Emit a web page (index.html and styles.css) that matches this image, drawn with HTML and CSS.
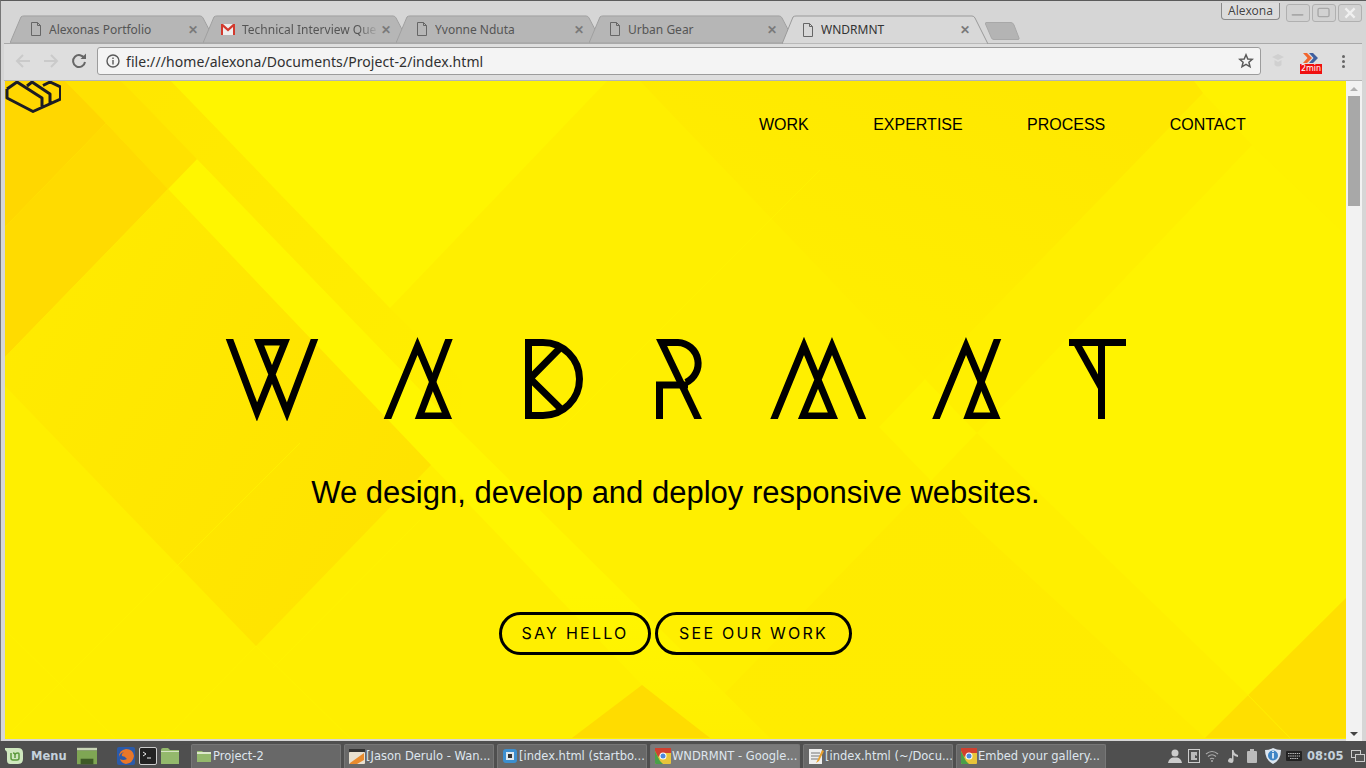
FILE: index.html
```html
<!DOCTYPE html>
<html lang="en">
<head>
<meta charset="utf-8">
<title>WNDRMNT</title>
<link rel="stylesheet" href="styles.css">
</head>
<body>
<div class="desktop">
  <div class="window">
    <div class="tabstrip">
      <div class="tab">
        <svg class="tab-shape" viewBox="0 0 206 29" preserveAspectRatio="none"><path class="tab-bg" d="M0 29 L11 2 Q12 1 14 1 H190 Q192 1 193 3 L206 29 Z"/></svg>
        <svg class="page-icon" viewBox="0 0 12 14"><path d="M1.5 .5 H7.5 L10.5 3.5 V13.5 H1.5 Z M7.5 .5 V3.5 H10.5"/></svg>
        <span class="tab-title">Alexonas Portfolio</span><span class="tab-x">✕</span>
      </div>
      <div class="tab">
        <svg class="tab-shape" viewBox="0 0 206 29" preserveAspectRatio="none"><path class="tab-bg" d="M0 29 L11 2 Q12 1 14 1 H190 Q192 1 193 3 L206 29 Z"/></svg>
        <svg class="gmail-icon" viewBox="0 0 14 11"><rect width="14" height="11" fill="#eee"/><path d="M0 0 H2 L7 4.5 L12 0 H14 V11 H12 V3 L7 7.5 L2 3 V11 H0 Z" fill="#d23a2e"/></svg>
        <span class="tab-title fade">Technical Interview Que</span><span class="tab-x">✕</span>
      </div>
      <div class="tab">
        <svg class="tab-shape" viewBox="0 0 206 29" preserveAspectRatio="none"><path class="tab-bg" d="M0 29 L11 2 Q12 1 14 1 H190 Q192 1 193 3 L206 29 Z"/></svg>
        <svg class="page-icon" viewBox="0 0 12 14"><path d="M1.5 .5 H7.5 L10.5 3.5 V13.5 H1.5 Z M7.5 .5 V3.5 H10.5"/></svg>
        <span class="tab-title">Yvonne Nduta</span><span class="tab-x">✕</span>
      </div>
      <div class="tab">
        <svg class="tab-shape" viewBox="0 0 206 29" preserveAspectRatio="none"><path class="tab-bg" d="M0 29 L11 2 Q12 1 14 1 H190 Q192 1 193 3 L206 29 Z"/></svg>
        <svg class="page-icon" viewBox="0 0 12 14"><path d="M1.5 .5 H7.5 L10.5 3.5 V13.5 H1.5 Z M7.5 .5 V3.5 H10.5"/></svg>
        <span class="tab-title">Urban Gear</span><span class="tab-x">✕</span>
      </div>
      <div class="tab active">
        <svg class="tab-shape" viewBox="0 0 206 29" preserveAspectRatio="none"><path class="tab-bg" d="M0 29 L11 2 Q12 1 14 1 H190 Q192 1 193 3 L206 29 Z"/></svg>
        <svg class="page-icon" viewBox="0 0 12 14"><path d="M1.5 .5 H7.5 L10.5 3.5 V13.5 H1.5 Z M7.5 .5 V3.5 H10.5"/></svg>
        <span class="tab-title">WNDRMNT</span><span class="tab-x">✕</span>
      </div>
      <svg class="newtab" viewBox="0 0 36 20"><path d="M1 1.5 H26 Q28 1.5 29 4 L34 17 Q34.500 18.500 33 18.500 H9 Q7 18.500 6.500 17 L.5 3 Q.2 1.500 1 1.500 Z"/></svg>
      <div class="winctl">
        <span class="profile">Alexona</span>
        <span class="winbtn"><svg viewBox="0 0 24 17"><rect x="5" y="9.500" width="13" height="2" rx="1"/></svg></span>
        <span class="winbtn"><svg viewBox="0 0 24 17"><rect class="outline" x="5.500" y="3.500" width="12" height="9" rx="1.500"/></svg></span>
        <span class="winbtn"><svg viewBox="0 0 24 17"><path class="cross" d="M7 3.500 L17 13.500 M17 3.500 L7 13.500"/></svg></span>
      </div>
    </div>

    <div class="toolbar">
      <svg class="nav-icon dim" viewBox="0 0 16 16"><path d="M15 8 H2 M8 2 L2 8 L8 14"/></svg>
      <svg class="nav-icon dim" viewBox="0 0 16 16"><path d="M1 8 H14 M8 2 L14 8 L8 14"/></svg>
      <svg class="nav-icon" viewBox="0 0 16 16"><path d="M13.500 5.500 A6 6 0 1 0 14 9"/><path class="solid" d="M9.500 6 H15 V.5 Z"/></svg>
      <div class="omnibox">
        <svg class="info" viewBox="0 0 14 14"><circle cx="7" cy="7" r="6"/><path d="M7 6 V10.500 M7 3.500 V5"/></svg>
        <span class="url">file:///home/alexona/Documents/Project-2/index.html</span>
        <svg class="star" viewBox="0 0 16 16"><path d="M8 1.800 L9.800 6 L14.300 6.300 L10.900 9.300 L12 13.800 L8 11.400 L4 13.800 L5.100 9.300 L1.700 6.300 L6.200 6 Z"/></svg>
      </div>
      <svg class="ext-ghost" viewBox="0 0 14 16"><path d="M7 1 L13 4 L7 7 L1 4 Z M3.500 7 V12 Q7 15 10.500 12 V7 L7 9 Z"/></svg>
      <div class="ext-timer">
        <svg viewBox="0 0 16 10"><path class="chev-o" d="M0 0 H4 L9 5 L4 10 H0 L4.500 5 Z"/><path class="chev-b" d="M6 0 H10 L15 5 L10 10 H6 L10.500 5 Z"/></svg>
        <span class="timer-badge">2min</span>
      </div>
      <span class="menu-dots"><i></i><i></i><i></i></span>
    </div>

    <div class="viewport">
      <main class="page">
        <svg class="page-bg" viewBox="5 81 1341 658" preserveAspectRatio="none" aria-hidden="true">
          <defs>
            <linearGradient id="g-diamond" x1="0" y1="0.200" x2="1" y2="0.800"><stop offset="0" stop-color="#ffeb00"/><stop offset="1" stop-color="#ffe200"/></linearGradient>
            <linearGradient id="g-upper" x1="0.800" y1="0.100" x2="0.200" y2="0.900"><stop offset="0" stop-color="#ffe800"/><stop offset="1" stop-color="#ffef00"/></linearGradient>
            <linearGradient id="g-lower" x1="0.500" y1="0" x2="0.500" y2="1"><stop offset="0" stop-color="#ffeb00"/><stop offset="1" stop-color="#ffec00"/></linearGradient>
            <linearGradient id="g-band" x1="0" y1="0" x2="1" y2="1"><stop offset="0" stop-color="#ffe700"/><stop offset="1" stop-color="#ffef00"/></linearGradient>
            <linearGradient id="g-ray" x1="0.500" y1="0" x2="0.500" y2="1"><stop offset="0.750" stop-color="#fff600"/><stop offset="1" stop-color="#ffef00"/></linearGradient>
          </defs>
          <rect x="5" y="81" width="1341" height="658" fill="#ffef00"/>
          <polygon fill="#fff300" points="1252,145 1346,235 1346,598 1248,695 977,433"/>
          <polygon fill="#fff200" points="1194,81 1346,81 1346,235 1252,145 1203,93"/>
          <polygon fill="url(#g-upper)" points="640,81 1194,81 1203,93 925,379 680,123"/>
          <polygon fill="#fff400" points="925,379 977,433 931,481 879,427"/>
          <polygon fill="url(#g-lower)" points="931,481 970,522 1205,738 689,738 689,730"/>
          <polygon fill="url(#g-ray)" points="197,159 462,433 770,738 710,738 642,685 431,465 168,189"/>
          <polygon fill="url(#g-band)" points="121,81 171,81 390,308 462,380 462,433 197,159 134,95"/>
          <polygon fill="#fff500" points="171,81 607,81 390,308"/>
          <polygon fill="#ffe200" points="65,81 121,81 197,159 168,189 106,123"/>
          <polygon fill="#ffd700" points="5,81 65,81 106,123 5,227"/>
          <polygon fill="#ffdb00" points="106,123 168,189 5,357 5,227"/>
          <polygon fill="url(#g-diamond)" points="168,189 431,465 256,646 5,386 5,357"/>
          <polygon fill="#ffdc00" points="642,685 710,738 572,738"/>
          <polygon fill="#ffdf00" points="1346,598 1346,738 1205,738"/>
          <g class="hairlines">
            <path d="M5 630 L115 738"/>
            <path d="M256 646 L166 738"/>
            <path d="M5 738 L300 443"/>
            <path d="M273 668 L420 520"/>
            <path d="M256 646 L350 738"/>
            <path d="M560 430 L820 170"/>
            <path d="M1248 695 L1290 738"/>
          </g>
        </svg>

        <svg class="brand" viewBox="0 0 56 32" aria-label="WNDRMNT brand mark">
          <path class="brand-line" d="M2 8 L12 1 L37 17 V26 M2 8 V17 L28 30.500 L55.500 18 V6 L45 1 L38 4.500 M22 5 L27 1 L45 13 V22"/>
        </svg>

        <nav class="mainnav">
          <a class="navlink">WORK</a>
          <a class="navlink">EXPERTISE</a>
          <a class="navlink">PROCESS</a>
          <a class="navlink">CONTACT</a>
        </nav>

        <section class="hero">
          <svg class="wordmark" viewBox="225 335 902 87" role="img" aria-label="WNDRMNT">
            <defs>
              <clipPath id="clip-flat"><rect x="200" y="339" width="950" height="82"/></clipPath>
              <clipPath id="clip-foot"><rect x="200" y="330" width="950" height="89"/></clipPath>
              <clipPath id="clip-box"><rect x="200" y="339" width="950" height="80"/></clipPath>
              <g id="glyph-a" class="stroke">
                <g clip-path="url(#clip-box)"><path d="M450.500 335 L417 423"/></g>
                <g clip-path="url(#clip-foot)"><path d="M385 425 L417.500 346 L447 416 H418"/></g>
              </g>
            </defs>
            <g class="stroke">
              <g clip-path="url(#clip-flat)"><path d="M228 335 L257 412 L285 342 H259 L287 412 L316 335"/></g>
              <use href="#glyph-a"/>
              <path d="M528.500 342.500 H543 A36.500 36.500 0 0 1 543 415.500 H528.500 Z"/>
              <path d="M561 347 L530 378.500 L562 410"/>
              <g clip-path="url(#clip-box)">
                <path d="M658 335 L701 425"/>
                <path d="M659.500 425 V385 H688"/>
                <path d="M662 342.500 H678 A21 21 0 0 1 686 382.500"/>
              </g>
              <g clip-path="url(#clip-foot)"><path d="M771.600 425 L804 346 L833 416 H803 L832 346 L865 425"/></g>
              <use href="#glyph-a" x="548.500"/>
              <g clip-path="url(#clip-flat)">
                <path d="M1069 342.500 H1126"/>
                <path d="M1101.500 339 V419"/>
                <path d="M1072 335 L1101 387"/>
              </g>
            </g>
          </svg>
          <h1 class="tagline">We design, develop and deploy responsive websites.</h1>
          <div class="cta">
            <a class="btn btn-a">SAY HELLO</a>
            <a class="btn btn-b">SEE OUR WORK</a>
          </div>
        </section>
      </main>
      <div class="scrollbar">
        <span class="arrow up"></span>
        <span class="thumb"></span>
        <span class="arrow down"></span>
      </div>
    </div>
  </div>

  <footer class="taskbar">
    <svg class="mint" viewBox="0 0 20 18"><path d="M1 1 H14 Q19 1 19 6 V12 Q19 17 14 17 H6 Q3 17 3 13 V6 Q3 4 1 3 Z" fill="#cfe8bf"/><path d="M7 6 V11 Q7 13 9 13 H13 Q15 13 15 11 V7 Q15 6 14 6 Q11 6 11 8 V11 M11 8 Q11 6 9 6" fill="none" stroke="#5c9a3d" stroke-width="1.500"/></svg>
    <span class="menu-label">Menu</span>
    <svg class="tray-show" viewBox="0 0 22 18"><rect y="0" width="22" height="3" fill="#c9d6b6"/><rect y="3" width="22" height="15" fill="#7fa654"/><rect x="4" y="12" width="14" height="6" fill="#3e5a26"/></svg>
    <span class="launchers">
      <svg viewBox="0 0 18 18"><rect width="18" height="18" rx="2" fill="#2b5aa8"/><path d="M2 10 Q2 3 9 2 Q16 2 17 9 Q16 16 9 17 Q4 16 3 12 Q6 14 10 12 Q8 9 5 9 Q4 7 7 5 Q3 6 2 10 Z" fill="#e8772a"/></svg>
      <svg viewBox="0 0 18 18"><rect x=".5" y=".5" width="17" height="17" rx="1.500" fill="#222" stroke="#ccc"/><path d="M4 5 L7 7 L4 9 M8 11 H12" fill="none" stroke="#eee"/></svg>
      <svg viewBox="0 0 18 18"><path d="M0 3 Q0 1 2 1 H7 L9 3 H18 V17 H0 Z" fill="#94b96c"/><rect y="4" width="18" height="1" fill="#d7e4c3"/></svg>
    </span>
    <span class="task">
      <svg viewBox="0 0 16 14"><path d="M1 2 H6 L7 3 H15 V13 H1 Z" fill="#94b96c"/><rect x="1" y="3" width="14" height="2" fill="#dde8cb"/></svg>
      <span class="task-label">Project-2</span>
    </span>
    <span class="task">
      <svg viewBox="0 0 16 16"><rect y="1" width="16" height="3" fill="#333"/><rect y="4" width="16" height="12" rx="1" fill="#e8e0d0"/><path d="M1 15 L15 5 V12 L8 16 H1 Z" fill="#e88b2e"/></svg>
      <span class="task-label">[Jason Derulo - Wan...</span>
    </span>
    <span class="task">
      <svg viewBox="0 0 16 16"><rect x="1" y="1" width="14" height="14" rx="3" fill="#3d8fd0"/><rect x="4" y="4" width="8" height="8" fill="#dfe8ee"/><rect x="6" y="6" width="4" height="4" fill="#333"/></svg>
      <span class="task-label">[index.html (startbo...</span>
    </span>
    <span class="task current">
      <svg viewBox="0 0 16 16"><rect width="16" height="16" rx="1" fill="#e8c43a"/><path d="M0 0 H16 V5 H8 L3 9 L0 3 Z" fill="#d0402f"/><path d="M0 3 L5 13 L8 16 H1 Q0 16 0 15 Z" fill="#4aa04a"/><circle cx="8" cy="8" r="3.500" fill="#fff"/><circle cx="8" cy="8" r="2.500" fill="#4a88dd"/></svg>
      <span class="task-label">WNDRMNT - Google...</span>
    </span>
    <span class="task">
      <svg viewBox="0 0 16 16"><rect x="1" y="1" width="13" height="15" fill="#eee"/><path d="M3 5 H12 M3 8 H12 M3 11 H10" stroke="#777"/><path d="M14 2 L9 13 L8 15 L11 13 L16 3 Z" fill="#e8a02e"/></svg>
      <span class="task-label">[index.html (~/Docu...</span>
    </span>
    <span class="task">
      <svg viewBox="0 0 16 16"><rect width="16" height="16" rx="1" fill="#e8c43a"/><path d="M0 0 H16 V5 H8 L3 9 L0 3 Z" fill="#d0402f"/><path d="M0 3 L5 13 L8 16 H1 Q0 16 0 15 Z" fill="#4aa04a"/><circle cx="8" cy="8" r="3.500" fill="#fff"/><circle cx="8" cy="8" r="2.500" fill="#4a88dd"/></svg>
      <span class="task-label">Embed your gallery...</span>
    </span>
    <span class="tray">
      <svg class="t-user" viewBox="0 0 14 14"><circle cx="7" cy="4" r="3.500" fill="#ccc"/><path d="M0 14 Q1 9 5 8.500 H9 Q13 9 14 14 Z" fill="#ccc"/></svg>
      <svg class="t-net" viewBox="0 0 12 14"><rect x=".5" y=".5" width="11" height="13" fill="none" stroke="#ccc"/><path d="M3 3 H9 V7 L7 6 V9 H9 V11 H3 Z" fill="#bbb"/></svg>
      <svg class="t-wifi" viewBox="0 0 14 12"><path d="M1 4 Q7 -1 13 4 M3 6.500 Q7 3 11 6.500 M5 9 Q7 7.500 9 9" fill="none" stroke="#aaa" stroke-width="1.200"/><circle cx="7" cy="11" r="1" fill="#aaa"/></svg>
      <svg class="t-music" viewBox="0 0 10 14"><path d="M4 1 H5.500 Q6 5 10 6 V8 Q7 7.500 5.500 6 V11.500 A2.700 2.300 0 1 1 4 9.500 Z" fill="#c8c8c8"/></svg>
      <svg class="t-batt" viewBox="0 0 10 14"><rect x="3" y="0" width="4" height="2" fill="#bbb"/><rect y="2" width="10" height="12" rx="1" fill="#bbb"/></svg>
      <svg class="t-shield" viewBox="0 0 16 16"><path d="M8 0 Q12 2 16 2 Q16 12 8 16 Q0 12 0 2 Q4 2 8 0 Z" fill="#dce6f0"/><circle cx="8" cy="7.500" r="5" fill="#3d85c6"/><path d="M8 5 V10.500 M8 3 V4" stroke="#fff" stroke-width="1.500"/></svg>
      <svg class="t-keys" viewBox="0 0 16 10"><rect width="16" height="10" rx="1" fill="#222"/><path d="M2 2.500 H14 M2 5 H14 M4 7.500 H12" stroke="#bbb" stroke-dasharray="1.500 .7"/></svg>
      <span class="clock">08:05</span>
      <svg class="t-desk" viewBox="0 0 14 12"><rect x=".5" y=".5" width="9" height="7" fill="none" stroke="#ccc"/><rect x="4.500" y="4.500" width="9" height="7" fill="#555" stroke="#ccc"/></svg>
    </span>
  </footer>
</div>
</body>
</html>
```
FILE: styles.css
```css
* { box-sizing: border-box; }
html, body { margin: 0; padding: 0; }
body { width: 1366px; height: 768px; overflow: hidden; background: #4d4d4d; font-family: "Liberation Sans", Arial, sans-serif; }
.desktop { width: 1366px; height: 768px; display: flex; flex-direction: column; }

.window { height: 741px; flex: none; display: flex; flex-direction: column; background: #d6d6d6; border-top: 1px solid #5b5b5b; padding-left: 3px; padding-right: 4px; border-left: 1px solid #777; }

.tabstrip { height: 43px; flex: none; display: flex; align-items: flex-end; padding-left: 6px; position: relative; border-bottom: 1px solid #a9a9a9; }
.tab { width: 206px; height: 28px; flex: none; margin-right: -13px; position: relative; display: flex; align-items: center; padding-left: 20px; font: 12px "Noto Sans", "Open Sans", sans-serif; color: #555; }
.tab-shape { position: absolute; left: 0; top: 0; width: 100%; height: 100%; }
.tab-bg { fill: #b6b6b6; stroke: #a0a0a0; stroke-width: 1; vector-effect: non-scaling-stroke; }
.tab.active { z-index: 2; color: #333; margin-bottom: -1px; height: 29px; }
.tab.active .tab-bg { fill: #d8d8d8; stroke: #9a9a9a; }
.page-icon { width: 12px; height: 14px; position: relative; margin-right: 7px; flex: none; }
.page-icon path { fill: none; stroke: #666; stroke-width: 1; }
.gmail-icon { width: 14px; height: 11px; position: relative; margin-right: 7px; margin-left: -2px; flex: none; }
.tab-title { position: relative; width: 137px; white-space: nowrap; overflow: hidden; flex: none; }
.tab-title.fade { -webkit-mask-image: linear-gradient(90deg, #000 85%, transparent); mask-image: linear-gradient(90deg, #000 85%, transparent); }
.tab-x { position: relative; font-size: 12px; font-weight: 700; color: #7a7a7a; margin-left: 2px; }
.newtab { width: 36px; height: 20px; flex: none; margin: 0 0 2px 10px; position: relative; z-index: 1; }
.newtab path { fill: #b4b4b4; stroke: #a8a8a8; }

.winctl { position: absolute; top: 2px; right: 0; display: flex; align-items: flex-start; gap: 2px; }
.profile { width: 59px; height: 17px; margin-right: 4px; border: 1px solid #8a8a8a; border-top: none; border-radius: 0 0 4px 4px; background: #dcdcdc; text-align: center; font: 12px/16px "Noto Sans", sans-serif; color: #444; text-shadow: 0 0 1px #fff; }
.winbtn { width: 24px; height: 18px; margin-top: 1px; border: 1px solid #b0b0b0; border-radius: 3px; background: #d2d2d2; display: flex; }
.winbtn svg { width: 100%; height: 100%; }
.winbtn rect { fill: #a8a8a8; }
.winbtn rect.outline { fill: none; stroke: #a8a8a8; stroke-width: 1.500; }
.cross { stroke: #f0f0f0; stroke-width: 2.500; fill: none; }

.toolbar { height: 37px; flex: none; display: flex; align-items: center; padding-left: 11px; padding-bottom: 2px; background: #dedede; border-bottom: 1px solid #b5b5b5; }
.nav-icon { width: 16px; height: 16px; margin-right: 12px; flex: none; fill: none; stroke: #666; stroke-width: 2; }
.nav-icon.dim { stroke: #cacaca; }
.nav-icon .solid { fill: #666; stroke: none; }
.omnibox { width: 1164px; height: 28px; margin-left: -2px; flex: none; display: flex; align-items: center; background: #f4f4f4; border: 1px solid #9c9c9c; border-radius: 3px; padding-left: 8px; }
.info { width: 14px; height: 14px; flex: none; fill: none; stroke: #5a5a5a; stroke-width: 1.400; }
.url { margin-left: 6px; font: 14px "Noto Sans", "Open Sans", sans-serif; letter-spacing: .08px; color: #303030; flex: 1; white-space: nowrap; }
.star { width: 16px; height: 16px; margin-right: 6px; flex: none; fill: none; stroke: #5a5a5a; stroke-width: 1.500; }
.ext-ghost { width: 14px; height: 16px; margin-left: 10px; fill: #d0d0d0; flex: none; }
.ext-timer { width: 22px; margin-left: 15px; display: flex; flex-direction: column; align-items: center; flex: none; margin-top: 5px; }
.ext-timer svg { width: 16px; height: 10px; margin-bottom: 1px; }
.chev-o { fill: #f2652d; }
.chev-b { fill: #3f5f9f; }
.timer-badge { width: 22px; height: 10px; background: #f01010; color: #fff; font: 8px/10px "DejaVu Sans", sans-serif; text-align: center; }
.menu-dots { display: flex; flex-direction: column; gap: 2px; margin-left: 20px; flex: none; }
.menu-dots i { width: 3px; height: 3px; border-radius: 50%; background: #666; }

.viewport { flex: 1; display: flex; min-height: 0; padding-left: 1px; }
.page { width: 1341px; height: 658px; position: relative; overflow: hidden; flex: none; }
.page-bg { position: absolute; left: 0; top: 0; width: 100%; height: 100%; }
.hairlines path { fill: none; stroke: #fff400; stroke-width: 1; opacity: .7; }
.brand { position: absolute; left: 0; top: 0; width: 56px; height: 32px; }
.brand-line { fill: none; stroke: #1c1c24; stroke-width: 3; stroke-linejoin: round; }

.mainnav { position: relative; height: 88px; display: flex; justify-content: flex-end; align-items: center; padding-right: 68px; }
.navlink { padding: 0 32.200px; font-size: 16px; color: #000; }

.hero { position: relative; display: flex; flex-direction: column; align-items: center; padding-top: 166px; }
.wordmark { width: 902px; height: 87px; display: block; flex: none; }
.stroke path { fill: none; stroke: #000; stroke-width: 7; stroke-linejoin: miter; stroke-miterlimit: 8; }
.tagline { margin: 53px 0 0; font-size: 31px; line-height: 36px; font-weight: 400; color: #000; white-space: nowrap; }
.cta { display: flex; gap: 4px; margin-top: 101px; }
.btn { height: 43px; display: flex; align-items: center; justify-content: center; padding-bottom: 1px; border: 3px solid #000; border-radius: 22px; font: 16px "Inter", sans-serif; letter-spacing: 2.250px; color: #000; }
.btn-a { width: 152px; }
.btn-b { width: 197px; }

.scrollbar { width: 16px; flex: none; background: #f2f2f2; display: flex; flex-direction: column; align-items: center; position: relative; }
.arrow { position: absolute; width: 0; height: 0; border-left: 4px solid transparent; border-right: 4px solid transparent; }
.arrow.up { top: 6px; border-bottom: 4px solid #b0b0b0; }
.arrow.down { bottom: 5px; border-top: 4px solid #444; }
.thumb { width: 12px; height: 110px; margin-top: 15px; background: #a8a8a8; }

.taskbar { height: 27px; flex: none; display: flex; align-items: center; background: #4f4f4f; padding: 3px 0 0 4px; font: 11.500px "DejaVu Sans", sans-serif; color: #dfe6ee; }
.mint { width: 20px; height: 18px; flex: none; }
.menu-label { margin-left: 7px; font-weight: 700; color: #c5d2dc; font-size: 11.500px; width: 46px; flex: none; }
.tray-show { width: 20px; height: 18px; flex: none; }
.launchers { display: flex; gap: 4px; margin-left: 20px; width: 74px; flex: none; }
.launchers svg { width: 18px; height: 18px; flex: none; }
.task { width: 150px; height: 24px; display: flex; align-items: center; gap: 1px; padding: 0 0 1px 4px; background: #686868; border: 1px solid #777; border-bottom: none; border-radius: 2px 2px 0 0; margin-right: 3px; overflow: hidden; white-space: nowrap; flex: none; }
.task svg { width: 16px; height: 16px; flex: none; }
.task.current { background: #7a7a7a; }
.task-label { color: #dfe6ee; }
.tray { display: flex; align-items: center; margin-left: 59px; flex: none; }
.t-user { width: 14px; height: 14px; }
.t-net { width: 12px; height: 14px; margin-left: 6px; }
.t-wifi { width: 14px; height: 12px; margin-left: 5px; }
.t-music { width: 10px; height: 14px; margin-left: 9px; }
.t-batt { width: 10px; height: 14px; margin-left: 9px; }
.t-shield { width: 16px; height: 16px; margin-left: 8px; }
.t-keys { width: 16px; height: 10px; margin-left: 5px; }
.clock { margin-left: 5px; font-weight: 700; color: #c5d2dc; font-size: 11.500px; }
.t-desk { width: 14px; height: 12px; margin-left: 7px; }
```
